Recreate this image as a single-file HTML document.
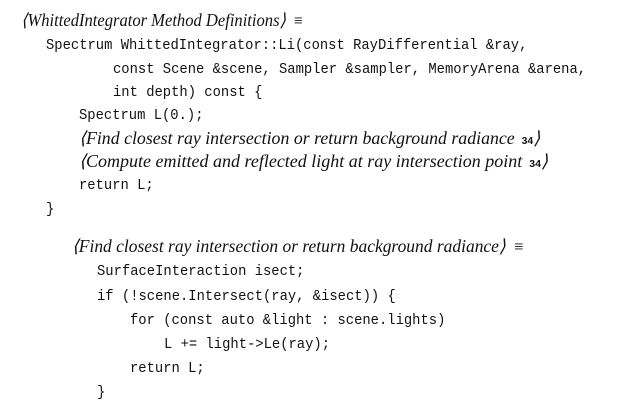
<!DOCTYPE html>
<html><head><meta charset="utf-8"><style>
body{margin:0;width:630px;height:412px;background:#fff;position:relative;overflow:hidden;color:#111}
.l{position:absolute;white-space:pre;line-height:20px;height:20px;transform-origin:0 50%}
.m{font-family:"Liberation Mono",monospace;font-size:15px;transform:scaleX(0.922)}
.i{font-family:"Liberation Serif",serif;font-style:italic;font-size:18px}
.n{font-family:"Liberation Sans",sans-serif;font-style:normal;font-weight:bold;font-size:10.5px;margin-left:7px}
.e{font-style:normal;font-size:17px;margin-left:4px}
</style></head><body>
<div class="l i" style="left:21px;top:10px;transform:scaleX(0.92)">⟨WhittedIntegrator Method Definitions⟩ <span class="e">≡</span></div>
<div class="l m" style="left:46px;top:36px">Spectrum WhittedIntegrator::Li(const RayDifferential &amp;ray,</div>
<div class="l m" style="left:113px;top:60px">const Scene &amp;scene, Sampler &amp;sampler, MemoryArena &amp;arena,</div>
<div class="l m" style="left:113px;top:83px">int depth) const {</div>
<div class="l m" style="left:79px;top:106px">Spectrum L(0.);</div>
<div class="l i" style="left:79px;top:128px;transform:scaleX(0.99)">⟨Find closest ray intersection or return background radiance<span class="n">34</span>⟩</div>
<div class="l i" style="left:79px;top:151px;transform:scaleX(1.0)">⟨Compute emitted and reflected light at ray intersection point<span class="n">34</span>⟩</div>
<div class="l m" style="left:79px;top:176px">return L;</div>
<div class="l m" style="left:46px;top:200px">}</div>
<div class="l i" style="left:72px;top:236px;transform:scaleX(0.97)">⟨Find closest ray intersection or return background radiance⟩ <span class="e">≡</span></div>
<div class="l m" style="left:97px;top:262px">SurfaceInteraction isect;</div>
<div class="l m" style="left:97px;top:287px">if (!scene.Intersect(ray, &amp;isect)) {</div>
<div class="l m" style="left:130px;top:311px">for (const auto &amp;light : scene.lights)</div>
<div class="l m" style="left:164px;top:335px">L += light-&gt;Le(ray);</div>
<div class="l m" style="left:130px;top:359px">return L;</div>
<div class="l m" style="left:97px;top:383px">}</div>
</body></html>
